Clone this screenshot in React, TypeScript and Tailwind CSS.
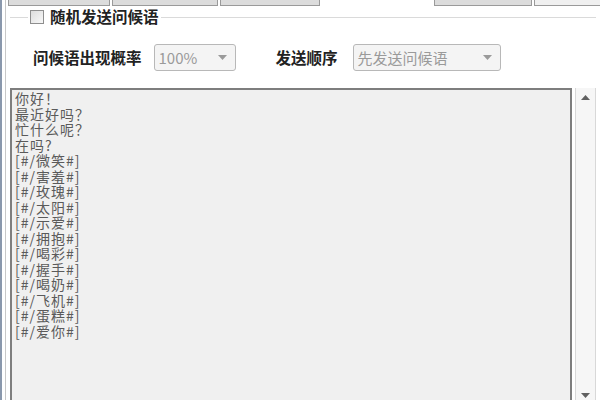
import React from 'react';

const LINES = [
  '你好！',
  '最近好吗？',
  '忙什么呢？',
  '在吗?',
  '[#/微笑#]',
  '[#/害羞#]',
  '[#/玫瑰#]',
  '[#/太阳#]',
  '[#/示爱#]',
  '[#/拥抱#]',
  '[#/喝彩#]',
  '[#/握手#]',
  '[#/喝奶#]',
  '[#/飞机#]',
  '[#/蛋糕#]',
  '[#/爱你#]',
];

const font = { fontFamily: '"Noto Sans CJK SC", "Liberation Sans", sans-serif' };

const Select: React.FC<{ value: string; width: string }> = ({ value, width }) => (
  <div className={`${width} h-[27px] border border-[#b8b8b8] rounded-[3px] bg-[#f4f4f4] flex items-center justify-between pl-[4px] pr-[8px]`}>
    <span className="text-[15px] text-[#9a9a9a] leading-none">{value}</span>
    <svg width="9" height="5" viewBox="0 0 9 5">
      <path d="M0 0h9L4.5 5z" fill="#9a9a9a" />
    </svg>
  </div>
);

export default function App() {
  return (
    <div className="w-[600px] h-[400px] bg-white overflow-hidden relative flex" style={font}>
      {/* left window edge */}
      <div className="w-[8px] h-full flex shrink-0">
        <div className="w-[2px] h-full bg-[#8a98ac]" />
        <div className="w-[3px] h-full bg-white" />
        <div className="w-[1px] h-full bg-[#c8c8c8]" />
      </div>

      <div className="flex-1 flex flex-col">
        {/* tab strip */}
        <div className="h-[7px] flex">
          <div className="w-[102px] h-[6px] bg-[#dcdcdc] border border-t-0 border-[#9a9a9a]" />
          <div className="w-[2px]" />
          <div className="w-[106px] h-[6px] bg-[#dcdcdc] border border-t-0 border-[#9a9a9a]" />
          <div className="w-[2px]" />
          <div className="w-[100px] h-[6px] bg-[#dcdcdc] border border-t-0 border-[#9a9a9a]" />
          <div className="w-[114px]" />
          <div className="w-[98px] h-[6px] bg-[#dcdcdc] border border-t-0 border-[#9a9a9a]" />
          <div className="w-[2px]" />
          <div className="flex-1 h-[6px] bg-[#f0f0f0] border border-t-0 border-r-0 border-[#9a9a9a]" />
        </div>

        {/* group box title */}
        <div className="h-[20px] flex items-center relative">
          <div className="absolute left-[2px] right-[4px] top-[10px] h-[1px] bg-[#dadada]" />
          <div className="relative ml-[20px] bg-white flex items-center gap-[6px] px-[2px]">
            <div className="w-[14px] h-[14px] border border-[#8e8e8e] bg-gradient-to-br from-[#dcdcdc] to-[#f8f8f8]" />
            <span className="text-[15.5px] font-bold text-[#222] leading-none">随机发送问候语</span>
          </div>
        </div>

        {/* options row */}
        <div className="h-[61px] flex items-center pl-[25px]">
          <span className="text-[15.5px] font-bold text-[#222]">问候语出现概率</span>
          <div className="ml-[12px]">
            <Select value="100%" width="w-[82px]" />
          </div>
          <span className="ml-[40px] text-[15.5px] font-bold text-[#222]">发送顺序</span>
          <div className="ml-[15px]">
            <Select value="先发送问候语" width="w-[148px]" />
          </div>
        </div>

        {/* text area + scrollbar */}
        <div className="flex-1 flex pl-[2px]">
          <div className="w-[562px] border-2 border-[#7e7e7e] border-b-0 bg-[#f0f0f0] pl-[3px] pt-[1px]">
            {LINES.map((l) => (
              <div key={l} className="text-[14px] leading-[15.5px] tracking-[1px] text-[#5a5a5a]">
                {l}
              </div>
            ))}
          </div>
          <div className="w-[3px]" />
          <div className="w-[21px] border-x border-[#d8d8d8] bg-[#f6f6f6] flex flex-col items-center justify-between pt-[7px] pb-[2px]">
            <svg width="9" height="5" viewBox="0 0 9 5">
              <path d="M4.5 0L9 5H0z" fill="#606060" />
            </svg>
            <svg width="9" height="5" viewBox="0 0 9 5">
              <path d="M0 0h9L4.5 5z" fill="#606060" />
            </svg>
          </div>
        </div>
      </div>
    </div>
  );
}
